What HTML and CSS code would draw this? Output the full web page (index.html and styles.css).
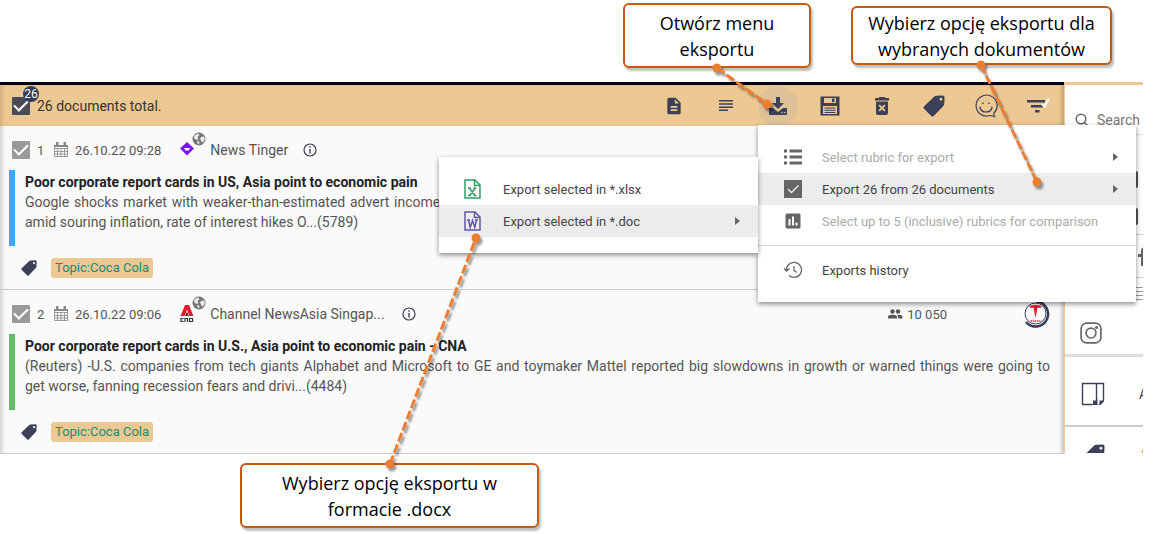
FILE: index.html
```html
<!DOCTYPE html>
<html lang="en">
<head>
  <meta charset="UTF-8" />
  <meta name="viewport" content="width=device-width, initial-scale=1.0" />
  <title>Documents export</title>
  <link rel="stylesheet" href="styles.css">
</head>
<body>
  <!-- Shared icons -->
  <svg class="sprite" aria-hidden="true">
    <symbol id="tag" viewBox="0 0 24 24">
      <path d="M1 12.500 12 1.800Q13 .9 14.500.8L21.500.500Q23.500.500 23.500 2.500L23.200 9.500Q23.200 11 22.200 12L11.500 23.200Q10 24 9 22.800L.8 14.800Q0 13.600 1 12.500ZM19.500 3a1.600 1.600 0 1 0 .1 0Z" fill-rule="evenodd"/>
    </symbol>
    <symbol id="calendar" viewBox="0 0 16 16">
      <path d="M1.500 3.500h13v11h-13zM1 6.500h14M1 9.500h14M1 12h14M4.500 6v9M8 6v9M11.500 6v9" fill="none" stroke="currentColor" stroke-width=".8"/>
      <path d="M1 3h14v2H1zM3 0h2.500v4H3zM10.500 0H13v4h-2.500z"/>
    </symbol>
    <symbol id="globe" viewBox="0 0 14 14">
      <circle cx="7" cy="7" r="6.500"/>
      <path d="M2.500 3.500 6 1.500 7.500 3 5.500 5 6.500 7 4.500 8 2 6zM9 5l3-.5.8 2.500-1.800 3.500-1.500-.5-.5-2-1-1zM5 9l2 .5.500 1.500-1.500 1.500z" fill="#eee"/>
    </symbol>
    <symbol id="info" viewBox="0 0 14 14">
      <circle cx="7" cy="7" r="6" fill="none" stroke="currentColor" stroke-width="1.200"/>
      <path d="M6.300 6h1.400v4.500H6.300zM6.300 3.300h1.400v1.500H6.300z"/>
    </symbol>
  </svg>

  <div class="app">
    <main class="feed">
      <header class="toolbar">
        <span class="select-all">
          <input type="checkbox" class="check dark" id="all" checked>
          <span class="badge">26</span>
        </span>
        <label class="total" for="all">26 documents total.</label>
        <div class="tools">
          <button class="tool" aria-label="Document">
            <svg width="20" height="20" viewBox="0 0 24 24"><path d="M6 2C4.900 2 4 2.900 4 4v16c0 1.100.9 2 2 2h12c1.100 0 2-.9 2-2V8l-6-6zm7 2 5 5h-5zM8 12h8v2H8zm0 4h8v2H8z" fill-rule="evenodd"/></svg>
          </button>
          <button class="tool" aria-label="Text">
            <svg width="16" height="14" viewBox="0 0 16 14"><path d="M1 1h14v1.500H1zm0 3.200h14v1.500H1zm0 3.200h14v1.500H1zm0 3.200h9v1.500H1z"/></svg>
          </button>
          <button class="tool active" aria-label="Export">
            <svg width="20" height="20" viewBox="0 0 20 20"><path d="M8 1h4v6h4l-6 6-6-6h4z"/><path d="M1 12h4l5 4 5-4h4v7H1zm12.500 4v1.300h1.300V16zm2.500 0v1.300h1.300V16z" fill-rule="evenodd"/></svg>
          </button>
          <button class="tool" aria-label="Save">
            <svg width="20" height="20" viewBox="0 0 20 20"><path d="M.5.500h19v19H.5zM4 2v5h12V2zm8 .500h2.500v3.500H12zM3 10v8h14v-8z" fill-rule="evenodd"/><path d="M4.500 11.500h11v1h-11zm0 2.200h11v1h-11zm0 2.200h11v1h-11z"/></svg>
          </button>
          <button class="tool" aria-label="Delete">
            <svg width="16" height="20" viewBox="0 0 16 20"><path d="M5.500 1h5l1 1H15v2.500H1V2h3.500zM2 5.500h12V17q0 2-2 2H4q-2 0-2-2zM5.700 8.500 4.500 9.700 6.800 12l-2.300 2.300 1.200 1.200L8 13.200l2.300 2.300 1.200-1.200L9.200 12l2.300-2.300-1.200-1.200L8 10.800z" fill-rule="evenodd"/></svg>
          </button>
          <button class="tool" aria-label="Tags">
            <svg width="22" height="22"><use href="#tag"/></svg>
          </button>
          <button class="tool" aria-label="Sentiment">
            <svg width="24" height="24" viewBox="0 0 24 24" fill="none" stroke="currentColor" stroke-width="1.200"><path d="M20 19a10.500 10.500 0 1 0-4 2.500q2.500.3 4.500 1Q19.500 21 20 19z"/><path d="M6 13.500q1 4.500 6 4.500t6-4.500M5.300 13.800l1.400-.7M18.700 13.800l-1.400-.7"/><path d="M9 8.500V10M15 8.500V10" stroke-width="1.400"/></svg>
          </button>
          <button class="tool" aria-label="Filter">
            <svg width="24" height="20" viewBox="0 0 24 20"><path d="M1 4h18v2.500H1zM5 9h12v2.500H5zM9 14h4.500v2.500H9z"/><path d="m16 8.500 2.500 2L23 2.500" fill="none" stroke="#fff" stroke-width="2"/></svg>
          </button>
        </div>
      </header>

      <article class="doc">
        <div class="meta">
          <input type="checkbox" class="check" id="doc1" checked>
          <label class="num" for="doc1">1</label>
          <svg class="calendar" width="16" height="16"><use href="#calendar"/></svg>
          <time>26.10.22 09:28</time>
          <span class="source-logo">
            <svg width="20" height="20" viewBox="0 0 20 20"><path d="m10 2 7 6.500-7 7-7-7z" fill="#7c16f5"/><path d="M7 8h6l-1.500 2.500h-3z" fill="#fff"/></svg>
            <svg class="globe" width="14" height="14"><use href="#globe"/></svg>
          </span>
          <a class="source" href="#">News Tinger</a>
          <svg class="info" width="14" height="14"><use href="#info"/></svg>
        </div>
        <div class="summary blue">
          <h2>Poor corporate report cards in US, Asia point to economic pain</h2>
          <p>Google shocks market with weaker-than-estimated advert income, whereas chipmakers and carmakers across Asia flag a weaker demand in the coming quarters amid souring inflation, rate of interest hikes O...(5789)</p>
        </div>
        <div class="topics">
          <svg width="16" height="16"><use href="#tag"/></svg>
          <a class="topic" href="#">Topic:Coca Cola</a>
        </div>
      </article>

      <article class="doc">
        <div class="meta">
          <input type="checkbox" class="check" id="doc2" checked>
          <label class="num" for="doc2">2</label>
          <svg class="calendar" width="16" height="16"><use href="#calendar"/></svg>
          <time>26.10.22 09:06</time>
          <span class="source-logo">
            <svg width="20" height="20" viewBox="0 0 20 20"><path d="M8 1h4l4.500 11h-4L10 5.500 7.500 12h-4z" fill="#e3182d"/><path d="M10 7.500 12 12H8z" fill="#a40f20"/><path d="M6.500 14.500H4v3h2.500M8 18v-3.500h2.500V18M15.500 18v-3.500H12.500v3h3" fill="none" stroke="#333" stroke-width="1.200"/></svg>
            <svg class="globe" width="14" height="14"><use href="#globe"/></svg>
          </span>
          <a class="source wide" href="#">Channel NewsAsia Singap...</a>
          <svg class="info" width="14" height="14"><use href="#info"/></svg>
          <span class="audience">
            <svg width="16" height="12" viewBox="0 0 16 12"><circle cx="5.500" cy="3.500" r="2.200"/><circle cx="11" cy="3.500" r="2.200"/><path d="M1 10.500V9q0-2.300 4.500-2.300T10 9v1.500zM11 10.500V9q0-1.300-1-2.200Q15.500 6.500 15.500 9v1.500z"/></svg>
            10 050
          </span>
          <svg class="brand" width="28" height="28" viewBox="0 0 28 28"><circle cx="14" cy="14" r="13.500" fill="#fff"/><path d="M14 1.500A12.500 12.500 0 1 1 4 22" fill="none" stroke="#333b57" stroke-width="2.500"/><circle cx="13.500" cy="13.500" r="10.500" fill="#fff" stroke="#333b57" stroke-width="1"/><path d="M7.500 6q6-2 12 0l-1 2q-1.500-.6-3-.6L13.500 18 11.500 7.400q-1.500 0-3 .6z" fill="#e3182d"/><path d="M8.500 21h10" stroke="#e3182d" stroke-width="1.500" stroke-dasharray="1.500 .7"/></svg>
        </div>
        <div class="summary green">
          <h2>Poor corporate report cards in U.S., Asia point to economic pain - CNA</h2>
          <p>(Reuters) -U.S. companies from tech giants Alphabet and Microsoft to GE and toymaker Mattel reported big slowdowns in growth or warned things were going to get&nbsp;worse, fanning recession fears and drivi...(4484)</p>
        </div>
        <div class="topics">
          <svg width="16" height="16"><use href="#tag"/></svg>
          <a class="topic" href="#">Topic:Coca Cola</a>
        </div>
      </article>
    </main>

    <aside class="side">
      <div class="search">
        <svg width="14" height="14" viewBox="0 0 14 14" fill="none" stroke="currentColor" stroke-width="1.500"><circle cx="6" cy="6" r="4.800"/><path d="m9.500 9.500 4 4"/></svg>
        <input type="text" placeholder="Search" aria-label="Search">
      </div>
      <div class="side-row ticks"><span></span><span></span></div>
      <div class="side-row facebook">
        <svg width="14" height="20" viewBox="0 0 14 20"><path d="M3 20v-9H0V8h3V5q0-4 4-4h4v3H8Q6 4 6 6v2h5v3H6v9z"/></svg>
      </div>
      <div class="grip"></div>
      <div class="side-row network">
        <svg width="22" height="22" viewBox="0 0 20 20" fill="none" stroke="currentColor" stroke-width="1.500"><rect x="1" y="1" width="18" height="18" rx="5"/><circle cx="10" cy="10" r="4.500"/><circle cx="15" cy="5" r=".7"/></svg>
      </div>
      <div class="side-row pages">
        <svg width="24" height="24" viewBox="0 0 24 24" fill="none" stroke="currentColor" stroke-width="1.400"><path d="M11 22.500H1.500v-21h14v17M15.500 1.500h7v17"/><path d="M10.500 23l6-6v2.500L13 23zM17 23l6-6v2.500L19.500 23zM12 18.500h4.500V23H12zM18.500 18.500H23L18.500 23z" fill="currentColor" stroke="none"/></svg>
        <span>A</span>
      </div>
      <div class="side-row tags">
        <svg width="22" height="22"><use href="#tag"/></svg>
        <span>A</span>
      </div>
    </aside>

    <!-- Export menu -->
    <div class="menu main-menu">
      <button class="item" disabled>
        <svg width="20" height="20" viewBox="0 0 20 20"><path d="M1 2.500h3v3H1zm5.500 0H19v3H6.500zM1 8.500h3v3H1zm5.500 0H19v3H6.500zM1 14.500h3v3H1zm5.500 0H19v3H6.500z"/></svg>
        <span>Select rubric for export</span>
        <i class="arrow"></i>
      </button>
      <button class="item current">
        <svg width="20" height="20" viewBox="0 0 20 20"><path d="M1 1h18v18H1z"/><path d="m5 10 3.500 3.500L15.500 6.500" fill="none" stroke="#eee" stroke-width="1.400"/></svg>
        <span>Export 26 from 26 documents</span>
        <i class="arrow"></i>
      </button>
      <button class="item" disabled>
        <svg width="20" height="20" viewBox="0 0 20 20"><path d="M4 2.500h12q1.500 0 1.500 1.500v12q0 1.500-1.500 1.500H4q-1.500 0-1.500-1.500V4q0-1.500 1.500-1.500zM5.500 8v6.500h2V8zM9 5.500v9h2v-9zM12.500 11.500v3h2v-3z" fill-rule="evenodd"/></svg>
        <span>Select up to 5 (inclusive) rubrics for comparison</span>
      </button>
      <hr>
      <button class="item">
        <svg width="20" height="20" viewBox="0 0 20 20" fill="none" stroke="currentColor" stroke-width="1.300"><path d="M3.500 10a7.500 7.500 0 1 1 2.500 5.500M1 8.500l2.500 2.500L6.500 8.500M11 6v4.500l3 2"/></svg>
        <span>Exports history</span>
      </button>
    </div>

    <div class="menu sub-menu">
      <button class="item">
        <svg class="xls" width="20" height="20" viewBox="2 0 20 20" fill="none" stroke="currentColor" stroke-width="1.500"><path d="M3 1h10l5 5v13H3zM12.500 1v5.500H18"/><path d="m7.500 9.500 5.500 7M13 9.500l-5.500 7M6 9h3M11.500 9h2.500M6 16.500h3M11.500 16.500h3"/></svg>
        <span>Export selected in *.xlsx</span>
      </button>
      <button class="item current">
        <svg class="word" width="20" height="20" viewBox="2 0 20 20" fill="none" stroke="currentColor" stroke-width="1.500"><path d="M3 1h10l5 5v13H3zM12.500 1v5.500H18"/><path d="m6.500 9 1.700 7.500L10.500 9.500l2.300 7 1.700-7.500M5 9h3M13 9h3"/></svg>
        <span>Export selected in *.doc</span>
        <i class="arrow"></i>
      </button>
    </div>
  </div>

  <!-- Instruction callouts -->
  <div class="callout step-open" lang="pl">Otwórz menu<br>eksportu</div>
  <div class="callout step-choose" lang="pl">Wybierz opcję eksportu dla<br>wybranych dokumentów</div>
  <div class="callout step-format" lang="pl">Wybierz opcję eksportu w<br>formacie .docx</div>
  <svg class="pointers" width="1155" height="534" viewBox="0 0 1155 534" aria-hidden="true">
    <g class="lines">
      <path d="M717 68 767 104"/>
      <path d="M981 65 1037 182"/>
      <path d="M390 464 476 238"/>
    </g>
    <g class="dots">
      <circle cx="717" cy="68" r="4.500"/><circle cx="767" cy="104" r="4.500"/>
      <circle cx="981" cy="65" r="4.500"/><circle cx="1037" cy="182" r="4.500"/>
      <circle cx="390" cy="464" r="4.500"/><circle cx="476" cy="238" r="4.500"/>
    </g>
  </svg>
</body>
</html>
```
FILE: styles.css
```css
:root {
  --sand: #ecc893;
  --navy: #3c4058;
  --text: #555;
  --orange: #ed7d31;
}

* {
  box-sizing: border-box;
}

body {
  margin: 0;
  padding-top: 82px;
  position: relative;
  background: #fff;
  color: var(--text);
  font-family: Roboto, "Liberation Sans", sans-serif;
  font-size: 14px;
  min-height: 534px;
}

svg {
  display: block;
  flex: none;
  fill: currentColor;
}

svg[fill="none"] {
  fill: none;
}

a {
  color: inherit;
  text-decoration: none;
}

button {
  border: none;
  background: none;
  padding: 0;
  font: inherit;
  color: inherit;
}

.sprite {
  position: absolute;
  width: 0;
  height: 0;
}

.app {
  position: relative;
  display: flex;
  margin-right: 12px;
}

/* Feed */
.feed {
  flex: 1;
  min-width: 0;
  background: #fafafa;
  border-top: 3px solid #00001a;
  box-shadow: inset 5px 0 4px -3px #ccc, inset -5px 0 4px -3px #bbb;
}

.toolbar {
  display: flex;
  align-items: center;
  height: 41px;
  padding-left: 12px;
  background: var(--sand);
  box-shadow: inset 5px 0 4px -3px #cbac7e, inset -5px 0 4px -3px #b99c70;
}

.select-all {
  position: relative;
  margin-right: 7px;
}

.check {
  appearance: none;
  display: grid;
  place-items: center;
  flex: none;
  width: 18px;
  height: 18px;
  margin: 0;
  border-radius: 1px;
  background: #999;
}

.check.dark {
  background: #4b4b58;
}

.check:checked::before {
  content: '';
  width: 12px;
  height: 6px;
  margin-bottom: 4px;
  border: solid #fff;
  border-width: 0 0 2px 2px;
  transform: rotate(-45deg);
}

.badge {
  position: absolute;
  left: 11px;
  top: -11px;
  width: 16px;
  height: 16px;
  border-radius: 50%;
  background: #333b57;
  color: #fff;
  font-size: 12px;
  line-height: 16px;
  text-align: center;
}

.total {
  color: #333;
}

.tools {
  display: flex;
  margin-left: auto;
}

.tool {
  position: relative;
  display: grid;
  place-items: center;
  width: 52px;
  height: 40px;
  color: var(--navy);
}

.tool.active {
  background: radial-gradient(circle, #dfc197 20px, transparent 20px);
}

/* Document cards */
.doc {
  height: 164px;
  padding: 14px 14px 0 12px;
  border-bottom: 1px solid #ccc;
}

.meta {
  display: flex;
  align-items: center;
  height: 20px;
  font-size: 13px;
}

.num {
  width: 23px;
  padding-left: 7px;
}

.calendar {
  color: #888;
  margin-right: 6px;
}

.source-logo {
  position: relative;
  margin: 0 13px 0 16px;
}

.globe {
  position: absolute;
  left: 15px;
  top: -8px;
  color: #777;
}

.source {
  font-size: 14px;
  margin-right: 15px;
}

.source.wide {
  margin-right: 18px;
}

.info {
  color: var(--navy);
}

.audience {
  display: flex;
  gap: 4px;
  margin-left: auto;
  margin-right: 75px;
  align-items: center;
}

.summary {
  height: 76px;
  margin: 10px 0 0 -3px;
  padding-left: 10px;
  border-left: 6px solid #42a5f5;
}

.summary.green {
  border-color: #66bb6a;
}

.summary h2 {
  margin: 0;
  padding-top: 2px;
  color: #222;
  font-size: 14px;
  font-weight: 700;
  line-height: 20px;
}

.summary p {
  margin: 0;
  font-size: 14px;
  line-height: 20px;
  text-align: justify;
}

.topics {
  display: flex;
  align-items: center;
  gap: 14px;
  margin-top: 12px;
  padding-left: 9px;
  color: var(--navy);
}

.topic {
  padding: 0 4px;
  border-radius: 3px;
  background: var(--sand);
  color: #21897c;
  font-size: 13px;
  line-height: 20px;
}

/* Side panel */
.side {
  width: 79px;
  height: 371px;
  overflow: hidden;
  border-top: 3px solid var(--sand);
  border-left: 1px solid var(--sand);
  background: #fff;
  color: #666;
}

.search {
  display: flex;
  align-items: center;
  height: 50px;
  padding: 20px 0 0 10px;
  gap: 8px;
  border-bottom: 1px solid #ddd;
}

.search input {
  width: 60px;
  padding: 0;
  border: none;
  outline: none;
  background: none;
  font: inherit;
}

.search input::placeholder {
  color: #777;
}

.side-row {
  display: flex;
  align-items: center;
  border-bottom: 1px solid #ccc;
}

.ticks {
  flex-direction: column;
  align-items: flex-end;
  justify-content: center;
  gap: 20px;
  height: 100px;
  padding: 26px 5px 0 0;
}

.ticks span {
  width: 16px;
  height: 17px;
  border-radius: 2px;
  background: #555;
}

.facebook {
  height: 43px;
  padding-left: 73px;
}

.grip {
  height: 22px;
  padding-top: 9px;
  background: repeating-linear-gradient(#999 0 1px, #fff 1px 4px) content-box;
}

.network {
  height: 57px;
  padding: 12px 0 0 15px;
  border-bottom: 3px solid #ddd;
}

.pages {
  height: 70px;
  padding: 6px 0 0 16px;
  gap: 34px;
  color: var(--navy);
  border-bottom-width: 2px;
}

.tags {
  align-items: flex-start;
  padding: 17px 0 0 18px;
  gap: 35px;
  border: none;
  color: var(--navy);
}

.tags span {
  color: #e0a030;
}

/* Export menus */
.menu {
  position: absolute;
  padding: 16px 0;
  background: #fff;
  box-shadow: 0 2px 5px rgba(0, 0, 0, 0.45);
}

.main-menu {
  top: 43px;
  right: 7px;
  width: 378px;
}

.sub-menu {
  top: 75px;
  right: 385px;
  width: 319px;
}

.item {
  display: flex;
  align-items: center;
  width: 100%;
  height: 32px;
  padding: 0 18px 0 25px;
  gap: 19px;
  color: #444;
  font-size: 13px;
  text-align: left;
  white-space: nowrap;
}

.item svg {
  color: #666;
}

.item svg.xls {
  color: #2e9e63;
}

.item svg.word {
  color: #6257a5;
}

.item:disabled {
  color: #aaa;
}

.item.current {
  background: #ececec;
}

.arrow {
  margin-left: auto;
  border: 4px solid transparent;
  border-left: 5px solid #666;
  border-right: none;
}

.menu hr {
  margin: 8px 0;
  border: none;
  border-top: 1px solid #ddd;
}

/* Callouts */
.callout {
  position: absolute;
  display: grid;
  place-items: center;
  border: 2px solid #c55a11;
  border-radius: 6px;
  background: #fff;
  box-shadow: 2px 3px 2px rgba(0, 0, 0, 0.25);
  color: #000;
  font-family: "Open Sans", "Noto Sans", sans-serif;
  font-size: 18px;
  line-height: 26px;
  text-align: center;
}

.step-open {
  top: 3px;
  right: 344px;
  width: 188px;
  height: 65px;
}

.step-choose {
  top: 6px;
  right: 43px;
  width: 261px;
  height: 59px;
}

.step-format {
  top: 463px;
  right: 616px;
  width: 299px;
  height: 65px;
}

.pointers {
  position: absolute;
  top: 0;
  right: 0;
  pointer-events: none;
  filter: drop-shadow(2px 3px 1px rgba(0, 0, 0, 0.4));
}

.lines {
  fill: none;
  stroke: var(--orange);
  stroke-width: 3;
  stroke-dasharray: 9 3;
}

.dots {
  fill: var(--orange);
}
```
